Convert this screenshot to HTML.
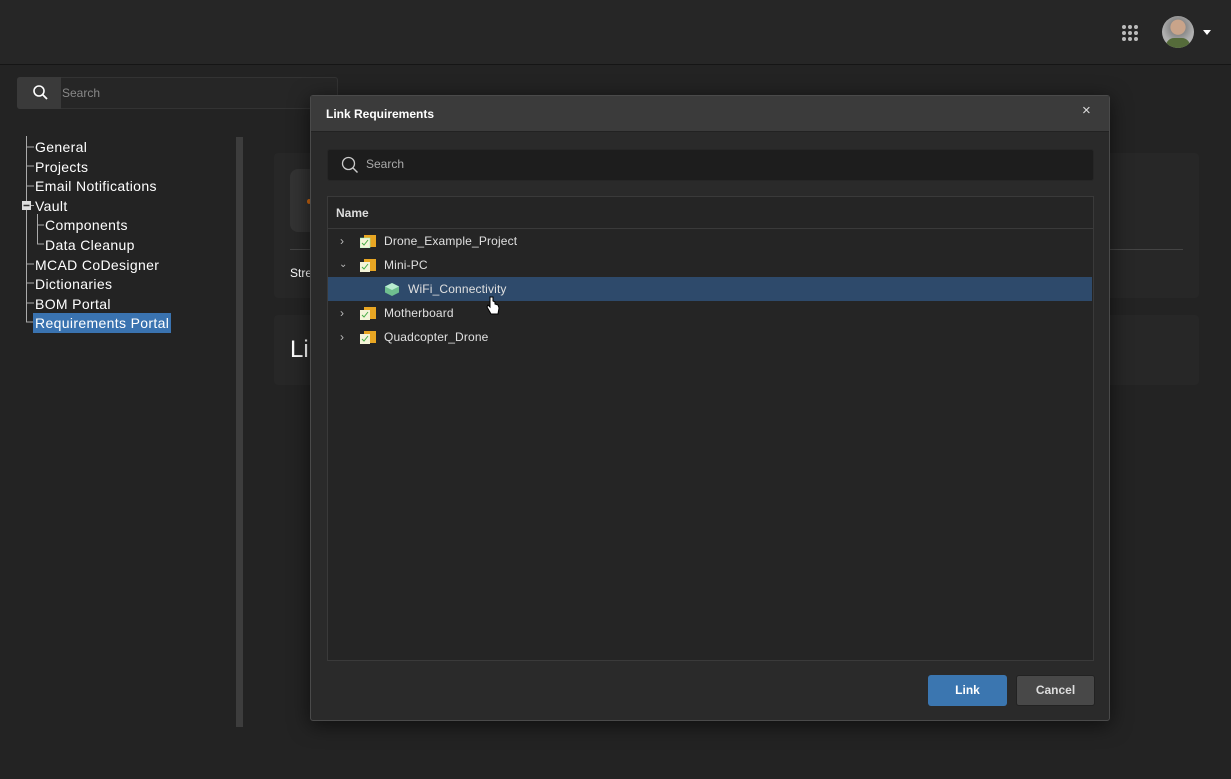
<!DOCTYPE html>
<html><head><style>
*{margin:0;padding:0;box-sizing:border-box}
body{width:1231px;height:779px;background:#232323;font-family:"Liberation Sans",sans-serif;color:#fff;position:relative;overflow:hidden}
.abs{position:absolute}
.top{left:0;top:0;width:1231px;height:65px;background:#262626;border-bottom:1px solid #151515}
.tree div{position:absolute;font-size:14px;line-height:18px;white-space:nowrap;letter-spacing:.35px}
.dlg{left:310px;top:95px;width:800px;height:626px;background:#2a2a2a;border:1px solid #4a4a4a;border-radius:3px;box-shadow:0 4px 20px rgba(0,0,0,.6)}
.row{position:absolute;left:0;width:764px;height:24px;font-size:12px;color:#e0e0e0;line-height:24px;letter-spacing:.15px}
.fold{position:absolute;width:16px;height:13px}
</style></head><body>
<div class="abs top"></div>
<svg class="abs" style="left:1121px;top:24px" width="18" height="18"><g fill="#bbb"><circle cx="3" cy="3" r="2"/><circle cx="9" cy="3" r="2"/><circle cx="15" cy="3" r="2"/><circle cx="3" cy="9" r="2"/><circle cx="9" cy="9" r="2"/><circle cx="15" cy="9" r="2"/><circle cx="3" cy="15" r="2"/><circle cx="9" cy="15" r="2"/><circle cx="15" cy="15" r="2"/></g></svg>
<div class="abs" style="left:1162px;top:16px;width:32px;height:32px;border-radius:50%;background:radial-gradient(circle at 50% 35%,#c9a48a 0 28%,#8a8a8a 30%,#b0b0b0 60%);overflow:hidden"><div style="position:absolute;left:4px;top:22px;width:24px;height:14px;background:#556b3a;border-radius:8px 8px 0 0"></div></div>
<div class="abs" style="left:1203px;top:30px;border-left:4px solid transparent;border-right:4px solid transparent;border-top:5px solid #fff"></div>

<div class="abs" style="left:17px;top:77px;width:321px;height:32px;background:#262626;border:1px solid #333;border-radius:3px"></div>
<div class="abs" style="left:17px;top:77px;width:44px;height:32px;background:#3a3a3a;border-radius:3px 0 0 3px"></div>
<svg class="abs" style="left:32px;top:84px" width="16" height="16"><circle cx="7" cy="7" r="5" fill="none" stroke="#fff" stroke-width="1.6"/><path d="M11 11l4 4" stroke="#fff" stroke-width="1.8"/></svg>
<div class="abs" style="left:62px;top:86px;font-size:12px;color:#888">Search</div>

<div class="abs" style="left:236px;top:137px;width:7px;height:590px;background:#3d3d3d"></div>
<svg class="abs" style="left:18px;top:136px" width="40" height="195"><g stroke="#aaa" stroke-width="1" fill="none"><path d="M8.5 0V186H16"/><path d="M8 11H16M8 30H16M8 50H16M8 128H16M8 147H16M8 167H16"/><path d="M19.5 78V108H26M19 89H26"/></g><rect x="4" y="65" width="9" height="9" fill="#ddd"/><path d="M5.5 69.5H11.5" stroke="#333" stroke-width="1.5"/><path d="M13 69.5H16" stroke="#aaa"/></svg>
<div class="tree">
<div style="left:35px;top:138px">General</div>
<div style="left:35px;top:158px">Projects</div>
<div style="left:35px;top:177px">Email Notifications</div>
<div style="left:35px;top:197px">Vault</div>
<div style="left:45px;top:216px">Components</div>
<div style="left:45px;top:236px">Data Cleanup</div>
<div style="left:35px;top:256px">MCAD CoDesigner</div>
<div style="left:35px;top:275px">Dictionaries</div>
<div style="left:35px;top:295px">BOM Portal</div>
<div style="left:33px;top:313px;background:#3a73b0;padding:1px 2px;height:20px">Requirements Portal</div>
</div>

<div class="abs" style="left:274px;top:153px;width:925px;height:145px;background:#272727;border-radius:4px"></div>
<div class="abs" style="left:290px;top:169px;width:60px;height:63px;background:#333;border-radius:8px"></div>
<div class="abs" style="left:307px;top:199px;width:4px;height:5px;background:#d66b10;border-radius:50%"></div>
<div class="abs" style="left:290px;top:249px;width:893px;height:1px;background:#444"></div>
<div class="abs" style="left:290px;top:266px;font-size:12px">Stre</div>
<div class="abs" style="left:274px;top:315px;width:925px;height:70px;background:#272727;border-radius:4px"></div>
<div class="abs" style="left:290px;top:336px;font-size:24px">Li</div>

<div class="abs dlg">
 <div class="abs" style="left:0;top:0;width:798px;height:36px;background:#3b3b3b;border-bottom:1px solid #222"></div>
 <div class="abs" style="left:15px;top:11px;font-size:12px;font-weight:bold">Link Requirements</div>
 <div class="abs" style="left:771px;top:6px;font-size:15px;color:#ddd">×</div>
 <div class="abs" style="left:16px;top:53px;width:767px;height:32px;background:#1d1d1d;border-radius:3px;border:1px solid #262626"></div>
 <svg class="abs" style="left:30px;top:60px" width="18" height="18"><circle cx="7.5" cy="7.5" r="6" fill="none" stroke="#ccc" stroke-width="1.3"/><path d="M12 12l4.5 4.5" stroke="#ccc" stroke-width="1.4"/></svg>
 <div class="abs" style="left:55px;top:61px;font-size:12px;color:#aaa">Search</div>
 <div class="abs" style="left:16px;top:100px;width:767px;height:465px;background:#252525;border:1px solid #3a3a3a">
  <div class="abs" style="left:0;top:0;width:765px;height:32px;border-bottom:1px solid #3a3a3a"></div>
  <div class="abs" style="left:8px;top:9px;font-size:12px;font-weight:bold;color:#ddd">Name</div>
  <div class="row" style="top:32px"><span class="abs" style="left:12px;font-size:12px;color:#bbb">›</span><svg class="fold" style="left:32px;top:6px"><rect x="4" y="0" width="12" height="12" fill="#e8a623"/><rect x="0" y="3" width="10" height="10" fill="#f4f4d8" stroke="#8fb" stroke-width=".5"/><path d="M2 8l2 2 4-5" stroke="#4a4" fill="none"/></svg><span class="abs" style="left:56px">Drone_Example_Project</span></div>
  <div class="row" style="top:56px"><span class="abs" style="left:11px;font-size:10px;color:#bbb">⌄</span><svg class="fold" style="left:32px;top:6px"><rect x="4" y="0" width="12" height="12" fill="#e8a623"/><rect x="0" y="3" width="10" height="10" fill="#f4f4d8"/><path d="M2 8l2 2 4-5" stroke="#4a4" fill="none"/></svg><span class="abs" style="left:56px">Mini-PC</span></div>
  <div class="row" style="top:80px;background:#2e4a6b"><svg class="abs" style="left:56px;top:5px" width="16" height="15"><path d="M8 1l7 3.5v6L8 14 1 10.5v-6z" fill="#6fbf8f"/><path d="M1 4.5L8 8l7-3.5L8 1z" fill="#b8ecd0"/></svg><span class="abs" style="left:80px">WiFi_Connectivity</span></div>
  <div class="row" style="top:104px"><span class="abs" style="left:12px;font-size:12px;color:#bbb">›</span><svg class="fold" style="left:32px;top:6px"><rect x="4" y="0" width="12" height="12" fill="#e8a623"/><rect x="0" y="3" width="10" height="10" fill="#f4f4d8"/><path d="M2 8l2 2 4-5" stroke="#4a4" fill="none"/></svg><span class="abs" style="left:56px">Motherboard</span></div>
  <div class="row" style="top:128px"><span class="abs" style="left:12px;font-size:12px;color:#bbb">›</span><svg class="fold" style="left:32px;top:6px"><rect x="4" y="0" width="12" height="12" fill="#e8a623"/><rect x="0" y="3" width="10" height="10" fill="#f4f4d8"/><path d="M2 8l2 2 4-5" stroke="#4a4" fill="none"/></svg><span class="abs" style="left:56px">Quadcopter_Drone</span></div>
 </div>
 <svg class="abs" style="left:174px;top:199px" width="16" height="22"><path d="M5 2v10l-2-2-1 2 4 7h7l1-6-1-3-3-1V7L8 6V2z" fill="#fff" stroke="#000" stroke-width="1"/></svg>
 <div class="abs" style="left:617px;top:579px;width:79px;height:31px;background:#3b76b0;border-radius:3px;font-size:12px;font-weight:bold;text-align:center;line-height:31px">Link</div>
 <div class="abs" style="left:705px;top:579px;width:79px;height:31px;background:#484848;border:1px solid #222;border-radius:3px;font-size:12px;font-weight:bold;text-align:center;line-height:29px;color:#ddd">Cancel</div>
</div>
</body></html>
